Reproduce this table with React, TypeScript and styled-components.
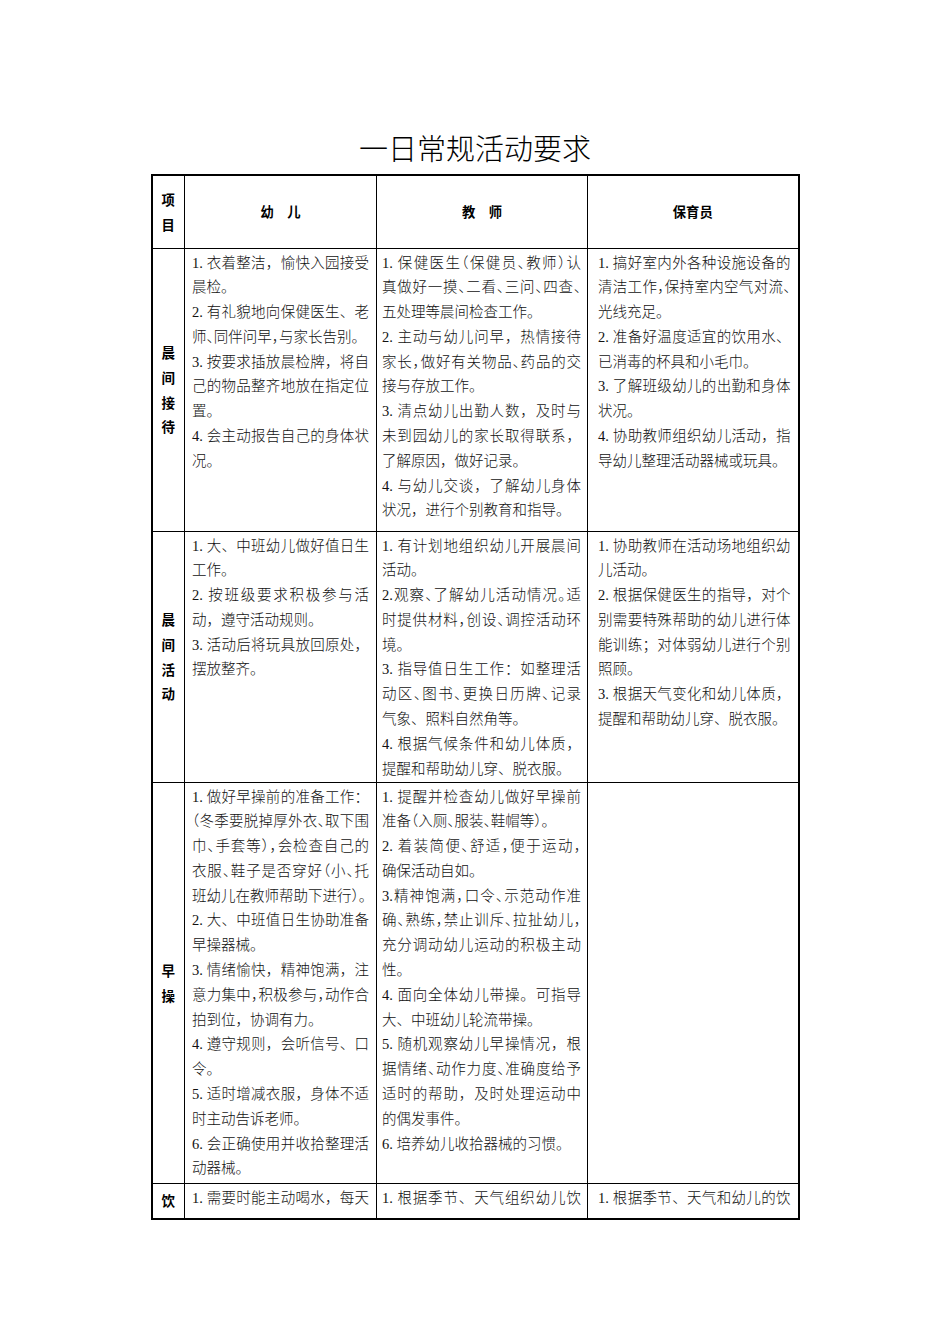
import React from "react";
import styled, { createGlobalStyle } from "styled-components";

const GlobalStyle = createGlobalStyle`
  html, body { margin: 0; padding: 0; background: #ffffff; }
  body { font-family: "Liberation Serif", "Noto Sans CJK SC", serif; color: #000; }
`;

type Para = { lines: string[]; cont?: boolean };
type Row = { label: string; height: number; cols: Para[][] };

const p = (lines: string[], cont = false): Para => ({ lines, cont });

const rows: Row[] = [
  {
    label: "晨间接待",
    height: 283,
    cols: [
      [
        p(["1. 衣着整洁，愉快入园接受", "晨检。"]),
        p(["2. 有礼貌地向保健医生、老", "师、同伴问早，与家长告别。"]),
        p(["3. 按要求插放晨检牌，将自", "己的物品整齐地放在指定位", "置。"]),
        p(["4. 会主动报告自己的身体状", "况。"]),
      ],
      [
        p(["1. 保健医生（保健员、教师）认", "真做好一摸、二看、三问、四查、", "五处理等晨间检查工作。"]),
        p(["2. 主动与幼儿问早，热情接待", "家长，做好有关物品、药品的交", "接与存放工作。"]),
        p(["3. 清点幼儿出勤人数，及时与", "未到园幼儿的家长取得联系，", "了解原因，做好记录。"]),
        p(["4. 与幼儿交谈，了解幼儿身体", "状况，进行个别教育和指导。"]),
      ],
      [
        p(["1. 搞好室内外各种设施设备的", "清洁工作，保持室内空气对流、", "光线充足。"]),
        p(["2. 准备好温度适宜的饮用水、", "已消毒的杯具和小毛巾。"]),
        p(["3. 了解班级幼儿的出勤和身体", "状况。"]),
        p(["4. 协助教师组织幼儿活动，指", "导幼儿整理活动器械或玩具。"]),
      ],
    ],
  },
  {
    label: "晨间活动",
    height: 251,
    cols: [
      [
        p(["1. 大、中班幼儿做好值日生", "工作。"]),
        p(["2. 按班级要求积极参与活", "动，遵守活动规则。"]),
        p(["3. 活动后将玩具放回原处，", "摆放整齐。"]),
      ],
      [
        p(["1. 有计划地组织幼儿开展晨间", "活动。"]),
        p(["2.观察、了解幼儿活动情况。适", "时提供材料，创设、调控活动环", "境。"]),
        p(["3. 指导值日生工作：如整理活", "动区、图书、更换日历牌、记录", "气象、照料自然角等。"]),
        p(["4. 根据气候条件和幼儿体质，", "提醒和帮助幼儿穿、脱衣服。"]),
      ],
      [
        p(["1. 协助教师在活动场地组织幼", "儿活动。"]),
        p(["2. 根据保健医生的指导，对个", "别需要特殊帮助的幼儿进行体", "能训练；对体弱幼儿进行个别", "照顾。"]),
        p(["3. 根据天气变化和幼儿体质，", "提醒和帮助幼儿穿、脱衣服。"]),
      ],
    ],
  },
  {
    label: "早操",
    height: 401,
    cols: [
      [
        p(["1. 做好早操前的准备工作：", "（冬季要脱掉厚外衣、取下围", "巾、手套等），会检查自己的", "衣服、鞋子是否穿好（小、托", "班幼儿在教师帮助下进行）。"]),
        p(["2. 大、中班值日生协助准备", "早操器械。"]),
        p(["3. 情绪愉快，精神饱满，注", "意力集中，积极参与，动作合", "拍到位，协调有力。"]),
        p(["4. 遵守规则，会听信号、口", "令。"]),
        p(["5. 适时增减衣服，身体不适", "时主动告诉老师。"]),
        p(["6. 会正确使用并收拾整理活", "动器械。"]),
      ],
      [
        p(["1. 提醒并检查幼儿做好早操前", "准备（入厕、服装、鞋帽等）。"]),
        p(["2. 着装简便、舒适，便于运动，", "确保活动自如。"]),
        p(["3.精神饱满，口令、示范动作准", "确、熟练，禁止训斥、拉扯幼儿，", "充分调动幼儿运动的积极主动", "性。"]),
        p(["4. 面向全体幼儿带操。可指导", "大、中班幼儿轮流带操。"]),
        p(["5. 随机观察幼儿早操情况，根", "据情绪、动作力度、准确度给予", "适时的帮助，及时处理运动中", "的偶发事件。"]),
        p(["6. 培养幼儿收拾器械的习惯。"]),
      ],
      [],
    ],
  },
  {
    label: "饮",
    height: 36,
    cols: [
      [p(["1. 需要时能主动喝水，每天"], true)],
      [p(["1. 根据季节、天气组织幼儿饮"], true)],
      [p(["1. 根据季节、天气和幼儿的饮"], true)],
    ],
  },
];

const FONT_PX = 14.5;

/* column metrics: widths, left/right padding */
const columns = [
  { w: 192, pl: 7, pr: 7 },
  { w: 211, pl: 5, pr: 6 },
  { w: 211, pl: 10, pr: 7 },
];

/* estimated width of a line in em units with full-width punctuation */
function emWidth(s: string): number {
  let w = 0;
  for (const ch of s) {
    if (ch === " " || ch === ".") w += 0.25;
    else if (/[0-9]/.test(ch)) w += 0.5;
    else w += 1;
  }
  return w;
}

const Page = styled.div`
  width: 950px;
  min-height: 1344px;
  box-sizing: border-box;
  padding-top: 128px;
  display: flex;
  flex-direction: column;
  align-items: center;
`;

const Title = styled.h1`
  margin: 0 0 8px;
  font-family: "Noto Sans CJK SC", sans-serif;
  font-weight: 300;
  font-size: 29px;
  line-height: 38px;
  color: #000;
`;

const Table = styled.table`
  width: 647px;
  table-layout: fixed;
  border-collapse: collapse;
  border: 2px solid #000;
`;

const Col = styled.col<{ $w: number }>`
  width: ${(p) => p.$w}px;
`;

const Tr = styled.tr<{ $h: number }>`
  height: ${(p) => p.$h}px;
`;

const HeadCell = styled.th`
  border: 1px solid #000;
  padding: 0;
  vertical-align: middle;
  text-align: center;
  font-family: "Noto Sans CJK SC", sans-serif;
  font-weight: 700;
  font-size: 13.3px;
  line-height: 25px;
  white-space: pre;
`;

const LabelCell = styled.td`
  border: 1px solid #000;
  padding: 0;
  vertical-align: middle;
  text-align: center;
  font-family: "Noto Sans CJK SC", sans-serif;
  font-weight: 700;
  font-size: 13.5px;
  line-height: 24.8px;
`;

const StackChar = styled.span`
  display: block;
`;

const BodyCell = styled.td<{ $pl: number; $pr: number }>`
  border: 1px solid #000;
  padding: 2px ${(p) => p.$pr}px 0 ${(p) => p.$pl}px;
  vertical-align: top;
  font-family: "Liberation Serif", "Noto Sans CJK SC", serif;
  font-weight: 300;
  font-size: ${FONT_PX}px;
  line-height: 24.8px;
  color: #111;
`;

const ParaBlock = styled.div``;

const Line = styled.span<{ $justify: boolean; $compress: boolean }>`
  display: block;
  white-space: nowrap;
  text-align: left;
  text-align-last: ${(p) => (p.$justify ? "justify" : "left")};
  font-feature-settings: ${(p) => (p.$compress ? '"halt"' : "normal")};
`;

function Paragraphs({ paras, capacity }: { paras: Para[]; capacity: number }) {
  return (
    <>
      {paras.map((para, i) => (
        <ParaBlock key={i}>
          {para.lines.map((ln, j) => (
            <Line
              key={j}
              $justify={!!para.cont || j < para.lines.length - 1}
              $compress={emWidth(ln) > capacity}
            >
              {ln}
            </Line>
          ))}
        </ParaBlock>
      ))}
    </>
  );
}

export default function App() {
  return (
    <>
      <GlobalStyle />
      <Page>
        <Title>一日常规活动要求</Title>
        <Table>
          <colgroup>
            <Col $w={33} />
            {columns.map((c, i) => (
              <Col key={i} $w={c.w} />
            ))}
          </colgroup>
          <tbody>
            <Tr $h={73}>
              <HeadCell>
                <StackChar>项</StackChar>
                <StackChar>目</StackChar>
              </HeadCell>
              <HeadCell>{"幼\u3000儿"}</HeadCell>
              <HeadCell>{"教\u3000师"}</HeadCell>
              <HeadCell>保育员</HeadCell>
            </Tr>
            {rows.map((row) => (
              <Tr key={row.label} $h={row.height}>
                <LabelCell>
                  {Array.from(row.label).map((c, i) => (
                    <StackChar key={i}>{c}</StackChar>
                  ))}
                </LabelCell>
                {row.cols.map((paras, ci) => {
                  const c = columns[ci];
                  const capacity = (c.w - c.pl - c.pr - 1) / FONT_PX;
                  return (
                    <BodyCell key={ci} $pl={c.pl} $pr={c.pr}>
                      <Paragraphs paras={paras} capacity={capacity} />
                    </BodyCell>
                  );
                })}
              </Tr>
            ))}
          </tbody>
        </Table>
      </Page>
    </>
  );
}
